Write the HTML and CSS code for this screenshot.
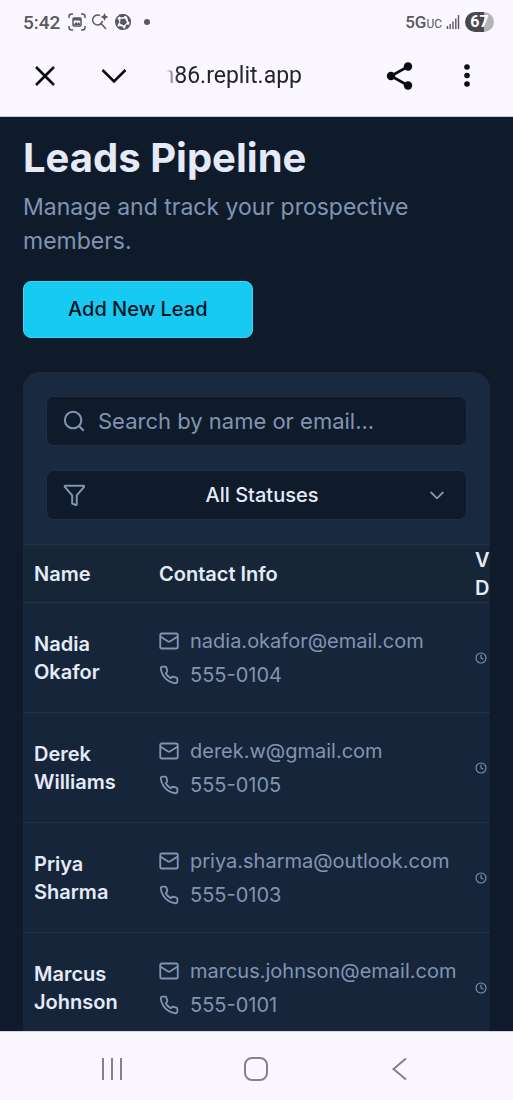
FILE: index.html
```html
<!DOCTYPE html>
<html lang="en">
<head>
<meta charset="utf-8">
<meta name="viewport" content="width=device-width, initial-scale=1">
<title>Leads Pipeline</title>
<link rel="stylesheet" href="styles.css">
</head>
<body>
<svg class="sprite" aria-hidden="true">
  <symbol id="mail" viewBox="0 0 24 24"><rect x="1.500" y="3" width="21" height="18" rx="2"/><path d="m22 7-8.970 5.700a1.940 1.940 0 0 1-2.060 0L2 7"/></symbol>
  <symbol id="phone" viewBox="0 0 24 24"><path d="M22 16.920v3a2 2 0 0 1-2.180 2 19.790 19.790 0 0 1-8.630-3.070 19.500 19.500 0 0 1-6-6 19.790 19.790 0 0 1-3.070-8.670A2 2 0 0 1 4.110 2h3a2 2 0 0 1 2 1.720 12.840 12.840 0 0 0 .700 2.810 2 2 0 0 1-.450 2.110L8.090 9.910a16 16 0 0 0 6 6l1.270-1.270a2 2 0 0 1 2.110-.450 12.840 12.840 0 0 0 2.810.700A2 2 0 0 1 22 16.920z"/></symbol>
  <symbol id="clock" viewBox="0 0 24 24"><circle cx="12" cy="12" r="10"/><path d="M12 6v6l4 2"/></symbol>
</svg>
<header class="browser">
  <div class="status">
    <span class="time">5:42</span>
    <svg class="status-icon" viewBox="0 0 18 18"><path d="M1 5V3.500Q1 1 3.500 1H5M13 1h1.500Q17 1 17 3.500V5M17 13v1.500Q17 17 14.500 17H13M5 17H3.500Q1 17 1 14.500V13"/><rect x="5" y="5" width="8" height="8" rx="1"/><path class="solid" d="M5 5h8v2.500H5zM5.500 12l2.500-3 1.500 1.500L11 9l1.500 3z"/></svg>
    <svg class="status-icon" viewBox="0 0 18 18"><path d="M9 2.500A5 5 0 1 0 11.500 8M10.500 11l4.500 5"/><path class="solid" d="m13.500 0 1.200 2.800 2.800 1.200-2.800 1.200-1.200 2.800-1.200-2.800L9.500 4l2.800-1.200z"/></svg>
    <svg class="status-icon" viewBox="0 0 18 18"><circle cx="9" cy="9" r="7.300"/><path class="solid" d="m6.500 6 4.500-.500 2 4L10 12.500l-4-2zM5 1.500 11.500 1l-1.500 3-3.500.500zM1 8l3-2.500L5.500 9l-2 3.500zM13 3.500l3 1.500 1 5-2.700-1.500zM12.500 11.500l3.500.500-3 4-2-1.500zM5 13l4 .700.500 3.300-5-1z"/></svg>
    <span class="dot"></span>
    <span class="network">5G<small>UC</small></span>
    <svg class="signal" viewBox="0 0 14 14"><path d="M1.500 14v-3M4.200 14V9M7 14V6.500M9.800 14V3.500M12.500 14V0"/></svg>
    <span class="battery">67</span>
  </div>
  <div class="toolbar">
    <button class="tool" aria-label="Close"><svg viewBox="0 0 28 28"><path d="m5 5 18 18M23 5 5 23"/></svg></button>
    <button class="tool tool-down" aria-label="Minimize"><svg viewBox="0 0 28 28"><path d="m2.500 8 11.500 11.500L25.500 8"/></svg></button>
    <span class="address">n86.replit.app</span>
    <button class="tool tool-share" aria-label="Share"><svg viewBox="0 0 28 28"><path d="M22 4.500 5 14l17 9.500"/><g class="solid"><circle cx="22" cy="4.500" r="4.200"/><circle cx="5" cy="14" r="4.200"/><circle cx="22" cy="23.500" r="4.200"/></g></svg></button>
    <button class="tool" aria-label="More options"><svg viewBox="0 0 28 28"><g class="solid"><circle cx="14" cy="5" r="2.800"/><circle cx="14" cy="13.500" r="2.800"/><circle cx="14" cy="22" r="2.800"/></g></svg></button>
  </div>
</header>
<main class="page">
  <h1>Leads Pipeline</h1>
  <p class="intro">Manage and track your prospective members.</p>
  <button class="add">Add New Lead</button>
  <section class="card">
    <div class="filters">
      <label class="field">
        <svg class="line" viewBox="0 0 24 24"><circle cx="11" cy="11" r="9"/><path d="m22 22-4.500-4.500"/></svg>
        <input type="text" placeholder="Search by name or email..." aria-label="Search by name or email">
      </label>
      <label class="field">
        <svg class="line" viewBox="0 0 24 24"><path d="M2.500 2h20a.700.700 0 0 1 .500 1.200L15 12.500V22a1 1 0 0 1-1.400.900l-2.500-1.300A1 1 0 0 1 10 21v-8.500L2 3.200A.700.700 0 0 1 2.500 2z"/></svg>
        <select aria-label="Status"><option>All Statuses</option></select>
        <svg class="line chevron" viewBox="0 0 24 24"><path d="m5 9 7 7 7-7"/></svg>
      </label>
    </div>
    <div class="table-wrap">
      <table>
        <colgroup><col class="col-name"><col class="col-contact"><col class="col-date"></colgroup>
        <thead><tr><th>Name</th><th>Contact Info</th><th>Visit<br>Date</th></tr></thead>
        <tbody>
          <tr><td class="name">Nadia Okafor</td><td><div class="contact"><svg class="line"><use href="#mail"/></svg>nadia.okafor@email.com</div><div class="contact"><svg class="line"><use href="#phone"/></svg>555-0104</div></td><td><svg class="line clock"><use href="#clock"/></svg></td></tr>
          <tr><td class="name">Derek Williams</td><td><div class="contact"><svg class="line"><use href="#mail"/></svg>derek.w@gmail.com</div><div class="contact"><svg class="line"><use href="#phone"/></svg>555-0105</div></td><td><svg class="line clock"><use href="#clock"/></svg></td></tr>
          <tr><td class="name">Priya Sharma</td><td><div class="contact"><svg class="line"><use href="#mail"/></svg>priya.sharma@outlook.com</div><div class="contact"><svg class="line"><use href="#phone"/></svg>555-0103</div></td><td><svg class="line clock"><use href="#clock"/></svg></td></tr>
          <tr><td class="name">Marcus Johnson</td><td><div class="contact"><svg class="line"><use href="#mail"/></svg>marcus.johnson@email.com</div><div class="contact"><svg class="line"><use href="#phone"/></svg>555-0101</div></td><td><svg class="line clock"><use href="#clock"/></svg></td></tr>
        </tbody>
      </table>
    </div>
  </section>
</main>
<nav class="system">
  <button aria-label="Recent apps"><svg viewBox="0 0 24 24"><path d="M3 1v22M12 1v22M21 1v22"/></svg></button>
  <button aria-label="Home"><svg viewBox="0 0 24 24"><rect x="1" y="1" width="22" height="22" rx="7"/></svg></button>
  <button aria-label="Back"><svg viewBox="0 0 24 24"><path d="M18 1.500 5.500 12 18 22.500"/></svg></button>
</nav>
</body>
</html>
```
FILE: styles.css
```css
* { box-sizing: border-box; }
body {
  margin: 0;
  height: 100vh;
  display: flex;
  flex-direction: column;
  overflow: hidden;
  background: #0f1b2b;
  color: #e5eaf8;
  font-family: Inter, "Liberation Sans", sans-serif;
  font-size: 20px;
}
button { border: 0; padding: 0; background: none; font: inherit; color: inherit; }
svg { display: block; flex: none; }
.sprite { display: none; }

.browser {
  flex: none;
  padding-bottom: 8px;
  background: #faf7ff;
  border-bottom: 1px solid #c9c8d8;
  color: #5a585f;
  font-family: Roboto, sans-serif;
}
.status { display: flex; align-items: center; height: 44px; padding: 0 19px 0 23px; }
.time { margin-right: 8px; font-size: 19px; font-weight: 500; }
.status-icon { width: 18px; height: 18px; margin-right: 5px; fill: none; stroke: currentColor; stroke-width: 1.5; }
.status .solid, .tool .solid { fill: currentColor; stroke: none; }
.dot { width: 6px; height: 6px; margin-left: 7px; border-radius: 50%; background: currentColor; }
.network { margin-left: auto; font-size: 17px; font-weight: 500; }
.network small { font-size: 12px; font-weight: 400; }
.signal { width: 14px; height: 14px; margin: 0 5px 0 4px; stroke: currentColor; stroke-width: 1.4; }
.battery {
  width: 29px;
  border-radius: 10px;
  background: linear-gradient(90deg, #49484e 67%, #b5b3ba 67%);
  color: #fff;
  font-size: 16px;
  font-weight: 700;
  line-height: 20px;
  text-align: center;
}
.toolbar { display: flex; align-items: center; height: 64px; padding: 0 32px 0 31px; color: #0c0b10; }
.tool svg { width: 28px; height: 28px; fill: none; stroke: currentColor; stroke-width: 2.6; }
.tool-down { margin-left: 41px; }
.tool-share { margin-right: 39px; }
.address {
  display: flex;
  justify-content: flex-end;
  width: 136px;
  margin: 0 auto 0 38px;
  overflow: hidden;
  color: #25242a;
  font-size: 23px;
  line-height: 32px;
  -webkit-mask-image: linear-gradient(90deg, transparent, #000 12px);
  mask-image: linear-gradient(90deg, transparent, #000 12px);
}

.page { flex: 1; min-height: 0; overflow: hidden; padding: 17px 23px 0; }
h1 { margin: 0 0 8px; font-size: 40px; line-height: 48px; font-weight: 700; }
.intro { margin: 0 0 23px; color: #8194b2; font-size: 23px; line-height: 34px; }
.add {
  display: block;
  padding: 0 44px;
  border: 1px solid #3cd5f5;
  border-radius: 8px;
  background: #17caf1;
  color: #07131f;
  font-weight: 500;
  line-height: 55px;
}
.card { margin-top: 34px; border-radius: 17px; background: #19293f; overflow: hidden; }
.filters { display: grid; gap: 24px; padding: 24px 23px; }
.field { display: grid; align-items: center; color: #8194b2; }
.field > * { grid-area: 1 / 1; }
.line { width: 22px; height: 22px; fill: none; stroke: currentColor; stroke-width: 2.2; stroke-linecap: round; stroke-linejoin: round; }
.field .line { z-index: 1; margin-left: 17px; pointer-events: none; }
.field .chevron { width: 20px; height: 20px; justify-self: end; margin-right: 20px; }
.field input, .field select {
  width: 100%;
  height: 50px;
  border: 1px solid #202e40;
  border-radius: 8px;
  background: #0f1b2b;
  font-family: inherit;
}
.field input { padding: 0 16px 0 51px; color: #e5eaf8; font-size: 22px; }
.field input::placeholder { color: #8194b2; opacity: 1; }
.field select { appearance: none; padding: 0 40px 0 51px; color: #e5eaf8; font-size: 20px; font-weight: 500; text-align-last: center; }

.table-wrap { overflow: hidden; }
table { width: 580px; table-layout: fixed; border-collapse: collapse; background: #17253b; }
.col-name { width: 125px; }
.col-contact { width: 316px; }
tr { border-top: 1px solid #213146; }
thead { background: #172637; }
th { height: 58px; padding: 0 11px; font-weight: 600; line-height: 28px; text-align: left; }
td { height: 110px; padding: 0 11px; vertical-align: middle; }
.name { font-weight: 600; line-height: 28px; }
.contact { display: flex; align-items: center; gap: 11px; color: #8194b2; line-height: 34px; }
.contact .line { width: 20px; height: 20px; }
.line.clock { width: 12px; height: 12px; color: #8194b2; }

.system { flex: none; display: flex; justify-content: center; gap: 120px; padding: 25px 2px 19px 0; border-top: 1px solid #d7d4df; background: #faf7ff; color: #858389; }
.system svg { width: 24px; height: 24px; fill: none; stroke: currentColor; stroke-width: 2; }
```
